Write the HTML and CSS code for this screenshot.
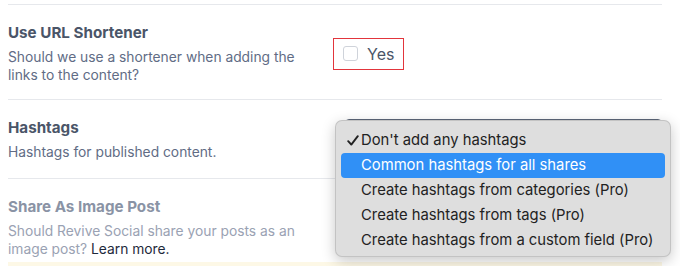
FILE: index.html
```html
<!DOCTYPE html>
<html lang="en">
<head>
    <meta charset="UTF-8">
    <meta name="viewport" content="width=device-width, initial-scale=1.0">
    <title>Settings</title>
    <link rel="stylesheet" href="styles.css">
</head>
<body>
<div class="settings">
    <div class="row">
        <div class="info">
            <h3>Use URL Shortener</h3>
            <p>Should we use a shortener when adding the links to the content?</p>
        </div>
        <div class="control">
            <label class="check-field">
                <span class="check-box"></span>
                Yes
            </label>
        </div>
    </div>

    <div class="row row-hashtags">
        <div class="info">
            <h3>Hashtags</h3>
            <p>Hashtags for published content.</p>
        </div>
        <div class="control control-top">
            <div class="select-wrap">
                <div class="select-box"></div>
                <ul class="menu">
                    <li class="menu-item">
                        <svg class="check-mark" width="12" height="11" viewBox="0 0 12 11">
                            <path d="M1.2 6.2 L4.3 9.6 L10.8 1.2" fill="none" stroke="#222" stroke-width="1.9" stroke-linecap="round" stroke-linejoin="round"/>
                        </svg>
                        Don't add any hashtags
                    </li>
                    <li class="menu-item active">Common hashtags for all shares</li>
                    <li class="menu-item">Create hashtags from categories (Pro)</li>
                    <li class="menu-item">Create hashtags from tags (Pro)</li>
                    <li class="menu-item">Create hashtags from a custom field (Pro)</li>
                </ul>
            </div>
        </div>
    </div>

    <div class="row row-last disabled">
        <div class="info">
            <h3>Share As Image Post</h3>
            <p>Should Revive Social share your posts as an image post? <a href="#">Learn more.</a></p>
        </div>
    </div>
    <div class="notice"></div>
</div>
</body>
</html>
```

FILE: styles.css
```css
body {
    font-family: Inter, "Noto Sans", Arial, sans-serif;
    margin: 0;
    padding: 0;
    background-color: #fff;
    overflow: hidden;
}

.settings {
    width: 654px;
    margin: 4px 0 0 8px;
    border-top: 1px solid #e6e8ec;
}

.row {
    display: flex;
    align-items: center;
    padding: 18px 0 15px;
    border-bottom: 1px solid #e6e8ec;
}

.row-hashtags {
    padding-bottom: 17px;
}

.row-last {
    border-bottom: none;
    padding-bottom: 0;
}

.info {
    width: 325px;
    flex-shrink: 0;
}

.info h3 {
    margin: 0;
    font-size: 15.2px;
    line-height: 20px;
    font-weight: 700;
    color: #4a5568;
}

.info p {
    max-width: 300px;
    margin: 5px 0 0;
    font-size: 13.8px;
    line-height: 18px;
    color: #616c85;
}

.info a {
    color: #1e293b;
    text-decoration: none;
}

.disabled h3 {
    color: #8a93a5;
}

.disabled p {
    color: #9aa2b3;
}

.control {
    flex: 1;
}

.control-top {
    align-self: flex-start;
}

.check-field {
    display: inline-flex;
    align-items: center;
    gap: 9px;
    height: 30px;
    padding: 0 9px;
    border: 1px solid #e2353c;
    font-size: 16px;
    color: #4b5568;
}

.check-box {
    width: 13px;
    height: 13px;
    border: 1px solid #cfd3da;
    border-radius: 3px;
    background: #fff;
}

.select-wrap {
    position: relative;
    margin: 1px 0 0 12px;
    width: 317px;
}

.select-box {
    height: 40px;
    border: 1px solid #5b6678;
    border-radius: 4px;
    box-sizing: border-box;
}

.menu {
    position: absolute;
    top: 1px;
    left: -10px;
    width: 336px;
    box-sizing: border-box;
    margin: 0;
    padding: 7px 5px 3px;
    list-style: none;
    background-color: #dedede;
    border: 1px solid rgba(0, 0, 0, 0.12);
    border-radius: 7px;
    box-shadow: 0 4px 14px rgba(0, 0, 0, 0.22);
    z-index: 5;
}

.menu-item {
    position: relative;
    height: 25px;
    line-height: 25px;
    padding-left: 20px;
    font-size: 14.8px;
    color: #222;
    border-radius: 4px;
    white-space: nowrap;
}

.check-mark {
    position: absolute;
    left: 6px;
    top: 7px;
}

.menu-item.active {
    background-color: #3090f6;
    color: #fff;
}

.notice {
    height: 20px;
    margin-top: 4px;
    background-color: #fdf8e6;
}
```
